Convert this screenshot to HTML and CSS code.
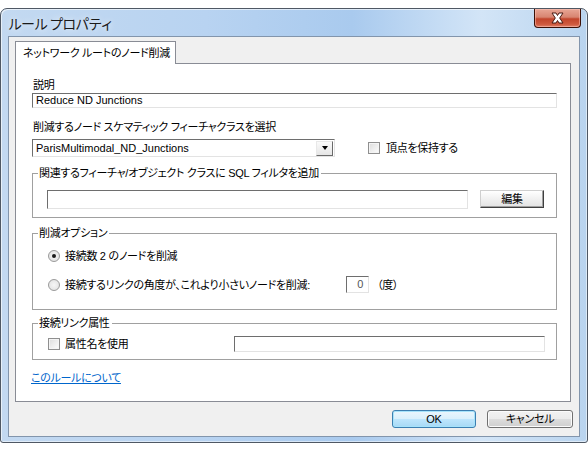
FILE: index.html
```html
<!DOCTYPE html>
<html lang="ja">
<head>
<meta charset="utf-8">
<title>ルール プロパティ</title>
<link rel="stylesheet" href="styles.css">
</head>
<body>
<div class="window">
  <div class="titlebar">
    <span class="title">ルール プロパティ</span>
    <div class="close">
      <svg width="17" height="12" viewBox="0 0 17 12">
        <path d="M3 1 L7 1 L8.5 3.5 L10 1 L14 1 L10.7 6 L14 11 L10 11 L8.5 8.5 L7 11 L3 11 L6.3 6 Z" fill="#ffffff" stroke="#4a1a12" stroke-width="1" stroke-linejoin="round"/>
      </svg>
    </div>
  </div>
  <div class="client">
    <div class="tab">ネットワーク ルートのノード削減</div>
    <div class="panel">
      <div class="label first">説明</div>
      <div class="textbox desc">Reduce ND Junctions</div>
      <div class="label second">削減するノード スケマティック フィーチャクラスを選択</div>
      <div class="combo-row">
        <div class="combo">
          <span class="combo-text">ParisMultimodal_ND_Junctions</span>
          <span class="drop"><span class="arrow"></span></span>
        </div>
        <div class="check keep">
          <span class="box"></span>
          <span>頂点を保持する</span>
        </div>
      </div>

      <div class="group g1">
        <div class="legend">関連するフィーチャ/オブジェクト クラスに SQL フィルタを追加</div>
        <div class="gbody g1-body">
          <div class="textbox sql"></div>
          <div class="btn-edit">編集</div>
        </div>
      </div>

      <div class="group g2">
        <div class="legend">削減オプション</div>
        <div class="gbody g2-body">
          <div class="radio-row r1">
            <span class="radio on"><span class="dot"></span></span>
            <span>接続数&nbsp;2&nbsp;のノードを削減</span>
          </div>
          <div class="radio-row r2">
            <span class="radio"></span>
            <span class="r2-text">接続するリンクの角度が、これより小さいノードを削減:</span>
            <span class="numbox">0</span>
            <span class="unit">（度）</span>
          </div>
        </div>
      </div>

      <div class="group g3">
        <div class="legend">接続リンク属性</div>
        <div class="gbody g3-body">
          <span class="box"></span>
          <span class="g3-text">属性名を使用</span>
          <div class="textbox attr"></div>
        </div>
      </div>

      <a class="link" href="#">このルールについて</a>
    </div>
    <div class="buttons">
      <div class="btn ok">OK</div>
      <div class="btn cancel">キャンセル</div>
    </div>
  </div>
</div>
</body>
</html>
```

FILE: styles.css
```css
* { box-sizing: border-box; }

html, body {
  margin: 0;
  padding: 0;
  background: #ffffff;
}

body {
  font-family: "Liberation Sans", "Noto Sans CJK JP", sans-serif;
  font-size: 11px;
  line-height: 14px;
  letter-spacing: -0.3px;
  color: #000000;
  font-feature-settings: "palt";
}

.window {
  margin-top: 8px;
  width: 588px;
  height: 435px;
  border: 1px solid #4f5864;
  border-radius: 7px 7px 3px 3px;
  padding: 0 7px 5px 7px;
  background: linear-gradient(90deg, #c3d9f1 0%, #b8d3f1 35%, #a9caee 60%, #d3e5f7 82%, #b9d4ef 100%);
  box-shadow: inset 1px 1px 0 rgba(255,255,255,0.6), inset -1px -1px 0 rgba(255,255,255,0.5);
  display: flex;
  flex-direction: column;
}

.titlebar {
  height: 27px;
  display: flex;
  align-items: flex-start;
}

.title {
  font-family: "Noto Sans CJK JP", sans-serif;
  font-feature-settings: normal;
  font-size: 14px;
  line-height: 18px;
  margin-top: 5px;
  letter-spacing: -1px;
  color: #1a1a1a;
  text-shadow: 0 0 6px rgba(255,255,255,0.9);
}

.close {
  margin-left: auto;
  margin-right: -1px;
  width: 47px;
  height: 19px;
  border: 1px solid #3b1007;
  border-top: none;
  border-radius: 0 0 4px 4px;
  background: linear-gradient(#e8a695 0%, #d88571 45%, #c2452c 55%, #cf5a3f 85%, #e0836a 100%);
  box-shadow: inset 0 0 0 1px rgba(255,200,190,0.5);
  display: flex;
  align-items: center;
  justify-content: center;
}

.client {
  width: 572px;
  height: 401px;
  border: 1px solid #8295ac;
  background: #f0f0f0;
  padding: 4px 8px 0 6px;
  display: flex;
  flex-direction: column;
}

.tab {
  width: 161px;
  height: 23px;
  border: 1px solid #898c95;
  border-bottom: none;
  background: #ffffff;
  padding-left: 7px;
  line-height: 22px;
  margin-bottom: -1px;
  position: relative;
  z-index: 1;
  white-space: nowrap;
}

.panel {
  width: 556px;
  height: 339px;
  border: 1px solid #898c95;
  background: #ffffff;
  padding: 0 14px 0 16px;
  display: flex;
  flex-direction: column;
}

.label { height: 14px; white-space: nowrap; padding-left: 1px; }
.label.first { margin-top: 14px; }
.label.second { margin-top: 12px; }

.textbox {
  border: 1px solid;
  border-color: #6e6e6e #e3e3e3 #e3e3e3 #6e6e6e;
  background: #ffffff;
  white-space: nowrap;
}

.desc {
  margin-top: 1px;
  height: 15px;
  line-height: 13px;
  padding-left: 3px;
  width: 525px;
  letter-spacing: 0;
}

.combo-row {
  margin-top: 5px;
  display: flex;
  align-items: center;
}

.combo {
  width: 303px;
  height: 18px;
  border: 1px solid;
  border-color: #6e6e6e #e3e3e3 #e3e3e3 #6e6e6e;
  display: flex;
  align-items: center;
  padding-left: 3px;
}

.combo-text { flex: 1; white-space: nowrap; letter-spacing: 0; }

.drop {
  width: 17px;
  height: 15px;
  margin-right: 1px;
  border: 1px solid;
  border-color: #e8e8e8 #6a6a6a #6a6a6a #e8e8e8;
  background: linear-gradient(#fafafa, #e6e6e6);
  display: flex;
  align-items: center;
  justify-content: center;
}

.arrow {
  width: 0;
  height: 0;
  border-left: 3.5px solid transparent;
  border-right: 3.5px solid transparent;
  border-top: 4px solid #000000;
}

.check {
  display: flex;
  align-items: center;
  gap: 6px;
  white-space: nowrap;
}

.keep { margin-left: 33px; }

.box {
  width: 12px;
  height: 12px;
  border: 1px solid #8f8f8f;
  background: linear-gradient(135deg, #dcdcdc, #fdfdfd);
  box-shadow: inset 0 0 0 1px #f4f4f4;
  flex: none;
}

.group {
  border: 1px solid #a0a0a0;
  width: 525px;
}

.legend {
  margin-top: -8px;
  margin-left: 5px;
  padding: 0 2px 0 1px;
  background: #ffffff;
  width: fit-content;
  height: 14px;
  white-space: nowrap;
}

.g1 { margin-top: 16px; }

.g1-body {
  padding: 10px 0 8px 14px;
  display: flex;
  align-items: flex-start;
}

.sql { width: 421px; height: 19px; }

.btn-edit {
  margin-left: 12px;
  width: 64px;
  height: 18px;
  border: 1px solid;
  border-color: #cfcfcf #3f3f3f #3f3f3f #cfcfcf;
  background: linear-gradient(#ffffff, #e2e2e2);
  box-shadow: inset -1px -1px 0 #a0a0a0;
  text-align: center;
  line-height: 16px;
}

.g2 { margin-top: 15px; }

.g2-body { padding: 9px 0 16px 15px; }

.radio-row {
  display: flex;
  align-items: center;
  white-space: nowrap;
}

.r1 { height: 14px; }
.r2 { margin-top: 13px; height: 17px; }

.radio {
  width: 12px;
  height: 12px;
  border-radius: 50%;
  border: 1px solid #9a9a9a;
  background: radial-gradient(circle, #f6f6f6 0%, #dedede 100%);
  margin-right: 5px;
  display: flex;
  align-items: center;
  justify-content: center;
  flex: none;
}

.radio .dot {
  width: 4px;
  height: 4px;
  border-radius: 50%;
  background: #1a1a1a;
}

.r2-text { width: 281px; flex: none; }

.numbox {
  width: 23px;
  height: 17px;
  border: 1px solid;
  border-color: #6e6e6e #e3e3e3 #e3e3e3 #6e6e6e;
  text-align: right;
  padding-right: 5px;
  line-height: 15px;
  color: #555555;
}

.unit { margin-left: 8px; }

.g3 { margin-top: 13px; }

.g3-body {
  padding: 6px 11px 7px 15px;
  display: flex;
  align-items: center;
  white-space: nowrap;
}

.g3-text { margin-left: 5px; }

.attr { margin-left: auto; width: 311px; height: 16px; }

.link {
  margin-top: 11px;
  margin-left: -1px;
  color: #0066cc;
  text-decoration: underline;
  width: fit-content;
  white-space: nowrap;
}

.buttons {
  margin-top: 8px;
  margin-right: -2px;
  display: flex;
  justify-content: flex-end;
  gap: 11px;
}

.btn {
  height: 18px;
  border-radius: 3px;
  text-align: center;
  line-height: 16px;
  white-space: nowrap;
}

.ok {
  width: 84px;
  border: 1px solid #3c7fb1;
  background: linear-gradient(#eaf6fd 0%, #d9f0fc 50%, #bee6fd 50%, #a7d9f5 100%);
  box-shadow: inset 0 0 0 1px #a6e3fb;
}

.cancel {
  width: 86px;
  border: 1px solid #707070;
  background: linear-gradient(#f2f2f2 0%, #ebebeb 50%, #dddddd 50%, #cfcfcf 100%);
  box-shadow: inset 0 0 0 1px #fbfbfb;
}
```
